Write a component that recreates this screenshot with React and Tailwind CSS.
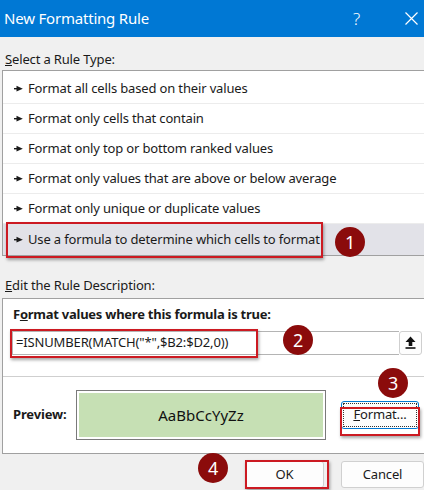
const rules = [
  'Format all cells based on their values',
  'Format only cells that contain',
  'Format only top or bottom ranked values',
  'Format only values that are above or below average',
  'Format only unique or duplicate values',
]

function Pointer() {
  return (
    <svg width="9" height="7" viewBox="0 0 9 7" className="shrink-0">
      <rect x="0" y="3" width="4" height="1.4" fill="#1a1a1a" />
      <polygon points="2.5,0.7 8.8,3.7 2.5,6.5" fill="#1a1a1a" />
    </svg>
  )
}

function Badge({ n, className }) {
  return (
    <div className={`absolute w-[30px] h-[30px] rounded-full bg-[#8b0b0b] text-white text-[18px] flex items-center justify-center leading-none ${className}`}>
      {n}
    </div>
  )
}

function RedBox({ className }) {
  return <div className={`absolute border-2 border-[#cc1a22] shadow-[1px_2px_3px_rgba(0,0,0,0.35)] pointer-events-none ${className}`} />
}

export default function App() {
  return (
    <div className="relative w-[424px] h-[490px] overflow-hidden bg-[#f0f0f0] text-[#1a1a1a] font-['Noto_Sans',sans-serif] text-[13px] tracking-[-0.15px]">
      {/* title bar */}
      <div className="h-[37px] bg-[#0078d4] text-white flex items-center pl-[4px]">
        <span className="text-[15px] tracking-[-0.2px]">New Formatting Rule</span>
        <span className="ml-auto text-[17px] font-light mr-[45px]">?</span>
        <svg width="13" height="13" viewBox="0 0 13 13" className="mr-[6px]">
          <path d="M0.5 0.5 L12.5 12.5 M12.5 0.5 L0.5 12.5" stroke="white" strokeWidth="1.2" />
        </svg>
      </div>

      <div className="h-[33px] flex items-end pb-[1px] pl-[5px]">
        <span><span className="underline">S</span>elect a Rule Type:</span>
      </div>

      {/* rule list */}
      <div className="ml-[2px] w-[430px] bg-white border border-[#a0a0a0] pt-[3px]">
        {rules.map((r) => (
          <div key={r} className="h-[30px] flex items-center gap-[5px] pl-[11px] border-b border-[#ececec]">
            <Pointer />
            <span>{r}</span>
          </div>
        ))}
        <div className="h-[31px] flex items-center gap-[5px] pl-[11px] bg-[#e2e2e8]">
          <Pointer />
          <span>Use a formula to determine which cells to format</span>
        </div>
      </div>

      <div className="h-[42px] flex items-end pb-[3px] pl-[5px]">
        <span><span className="underline">E</span>dit the Rule Description:</span>
      </div>

      {/* description box */}
      <div className="ml-[2px] w-[430px] h-[156px] bg-white border border-[#a0a0a0] flex flex-col">
        <div className="pt-[6px] pl-[10px] font-bold tracking-[-0.25px]">
          F<span className="underline">o</span>rmat values where this formula is true:
        </div>
        <div className="mt-[6px] ml-[9px] flex items-center">
          <div className="w-[387px] h-[24px] border border-[#b4b4b4] border-r-0 flex items-center pl-[3px]">
            =ISNUMBER(MATCH("*",$B2:$D2,0))
          </div>
          <div className="w-[23px] h-[24px] border border-[#cfcfcf] rounded-[3px] flex items-center justify-center bg-[#fdfdfd]">
            <svg width="11" height="13" viewBox="0 0 11 13">
              <polygon points="5.5,0.5 10.5,6 7.3,6 7.3,10 3.7,10 3.7,6 0.5,6" fill="#111" />
              <rect x="0.5" y="11.2" width="10" height="1.6" fill="#111" />
            </svg>
          </div>
        </div>
        <div className="mt-[21px] border-t border-[#cfcfcf]" />
        <div className="flex-1 flex items-center pl-[10px]">
          <span className="font-bold w-[63px]">Preview:</span>
          <div className="w-[250px] h-[50px] border border-[#7a7a7a] p-[2px] bg-white">
            <div className="h-full bg-[#c6e0b4] flex items-center justify-center text-[15px] tracking-normal text-[#111]">AaBbCcYyZz</div>
          </div>
          <div className="ml-[15px] w-[78px] h-[28px] rounded-[3px] border border-[#0078d4] bg-[#fdfdfd] p-[1px]">
            <div className="h-full border border-dotted border-[#333] flex items-center justify-center">
              <span><span className="underline">F</span>ormat...</span>
            </div>
          </div>
        </div>
      </div>

      {/* footer buttons */}
      <div className="flex pl-[245px] gap-[17px] mt-[7px]">
        <div className="w-[83px] h-[27px] rounded-[3px] border border-[#d0d0d0] bg-[#fdfdfd] flex items-center justify-center">OK</div>
        <div className="w-[83px] h-[27px] shrink-0 rounded-[3px] border border-[#d0d0d0] bg-[#fdfdfd] flex items-center justify-center">Cancel</div>
      </div>

      {/* annotations */}
      <RedBox className="left-[6px] top-[222px] w-[317px] h-[36px]" />
      <Badge n="1" className="left-[335px] top-[227px]" />
      <RedBox className="left-[10px] top-[329px] w-[248px] h-[29px]" />
      <Badge n="2" className="left-[283px] top-[325px]" />
      <Badge n="3" className="left-[378px] top-[368px]" />
      <RedBox className="left-[340px] top-[407px] w-[80px] h-[29px]" />
      <Badge n="4" className="left-[198px] top-[453px]" />
      <RedBox className="left-[245px] top-[460px] w-[84px] h-[29px]" />
    </div>
  )
}
